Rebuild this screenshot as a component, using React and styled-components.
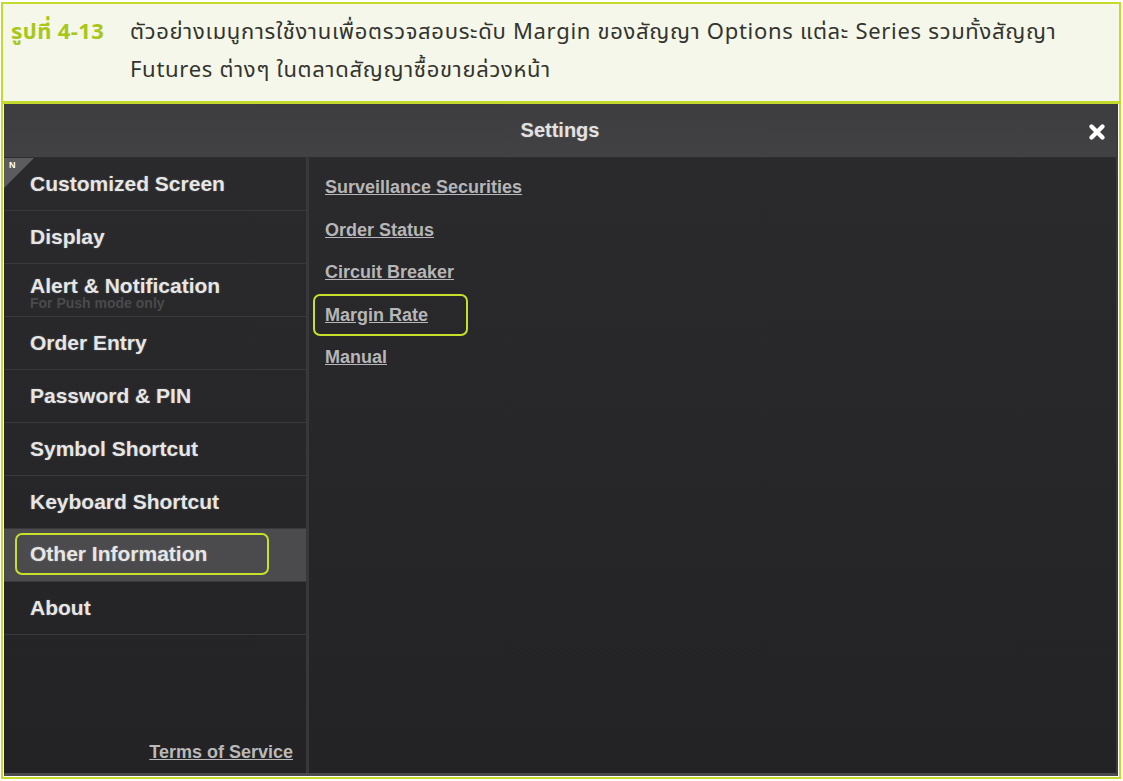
import React from 'react';
import styled, { createGlobalStyle } from 'styled-components';

const GlobalStyle = createGlobalStyle`
  html, body {
    margin: 0;
    padding: 0;
    background: #ffffff;
  }
  * {
    box-sizing: border-box;
  }
`;

const Frame = styled.div`
  width: 1123px;
  height: 781px;
  padding: 2px 2px 2px 1px;
  background: #ffffff;
`;

const Figure = styled.div`
  height: 100%;
  border: 2px solid #c4da2c;
  display: flex;
  flex-direction: column;
`;

const Caption = styled.div`
  height: 100px;
  flex: none;
  background: #f4f7e9;
  border-bottom: 3px solid #c4da2c;
  padding: 10px 10px 0 8px;
  display: flex;
  font-family: "Noto Sans Thai", "Noto Sans", "DejaVu Sans", sans-serif;
  font-size: 22px;
  line-height: 38px;
  color: #34342f;
`;

const FigureNo = styled.span`
  flex: none;
  width: 119px;
  font-weight: 700;
  letter-spacing: 0.4px;
  color: #a9c61a;
`;

const CaptionText = styled.span`
  flex: 1;
  white-space: nowrap;
  letter-spacing: 0.7px;
`;

const Window = styled.div`
  flex: 1;
  margin: 0 1px 1px 1px;
  display: flex;
  flex-direction: column;
  background: linear-gradient(#2b2a2c, #232224);
  border-bottom: 3px solid #4a4a4d;
  border-right: 2px solid #3c3c3f;
  font-family: "Liberation Sans", Arial, sans-serif;
`;

const TitleBar = styled.div`
  position: relative;
  height: 54px;
  flex: none;
  display: flex;
  align-items: center;
  justify-content: center;
  background: linear-gradient(#3d3d3f, #424244);
  border-bottom: 1px solid #2e2e30;
`;

const Title = styled.div`
  font-size: 20px;
  font-weight: 700;
  color: #e2e2e2;
  text-shadow: 0 0 2px rgba(255, 255, 255, 0.2);
`;

const CloseButton = styled.div`
  position: absolute;
  right: 9px;
  top: 18px;
  width: 20px;
  height: 20px;
`;

const Body = styled.div`
  flex: 1;
  display: grid;
  grid-template-columns: 305px 1fr;
`;

const Sidebar = styled.div`
  position: relative;
  display: flex;
  flex-direction: column;
  border-right: 3px solid #38373a;
  padding: 0 0 10px 0;
`;

const Corner = styled.div`
  position: absolute;
  left: 0;
  top: 0;
  width: 0;
  height: 0;
  border-top: 30px solid #5c5c5f;
  border-right: 30px solid transparent;
`;

const CornerLabel = styled.span`
  position: absolute;
  left: 5px;
  top: 2px;
  font-size: 9px;
  font-weight: 700;
  color: #ffffff;
`;

const MenuItem = styled.div`
  height: 53px;
  padding: ${p => (p.$note ? '0 0 4px 11px' : '0 0 0 11px')};
  display: flex;
  flex-direction: column;
  justify-content: center;
  border-bottom: 1px solid #39383b;
  background: ${p => (p.$active ? '#4b4a4d' : 'transparent')};
`;

const ItemLabel = styled.span`
  align-self: flex-start;
  margin-top: ${p => (p.$active ? '-3px' : '0')};
  font-size: 21px;
  line-height: 24px;
  font-weight: 700;
  color: #e6e6e6;
  padding: 7px 60px 7px 13px;
  border: 2px solid ${p => (p.$active ? '#c6e02c' : 'transparent')};
  border-radius: 7px;
  text-shadow: 0 0 2px rgba(255, 255, 255, 0.25);
`;

const ItemNote = styled.span`
  margin-top: -12px;
  padding-left: 15px;
  font-size: 14px;
  line-height: 16px;
  font-weight: 700;
  color: #4a4a4d;
`;

const Spacer = styled.div`
  flex: 1;
`;

const TermsLink = styled.a`
  align-self: flex-end;
  margin-right: 13px;
  font-size: 18px;
  font-weight: 700;
  color: #b9b9b9;
  text-decoration: underline;
`;

const Content = styled.div`
  padding: 8px 0 0 4px;
  display: flex;
  flex-direction: column;
  align-items: flex-start;
  gap: 0.5px;
`;

const ContentLink = styled.a`
  display: inline-block;
  padding: 7px 38px 7px 10px;
  border: 2px solid ${p => (p.$ring ? '#c6e02c' : 'transparent')};
  border-radius: 7px;
  font-size: 18px;
  line-height: 24px;
  font-weight: 700;
  color: #b6b6b8;
  text-decoration: underline;
`;

const menu = [
  { label: 'Customized Screen' },
  { label: 'Display' },
  { label: 'Alert & Notification', note: 'For Push mode only' },
  { label: 'Order Entry' },
  { label: 'Password & PIN' },
  { label: 'Symbol Shortcut' },
  { label: 'Keyboard Shortcut' },
  { label: 'Other Information', active: true },
  { label: 'About' },
];

const links = [
  { label: 'Surveillance Securities' },
  { label: 'Order Status' },
  { label: 'Circuit Breaker' },
  { label: 'Margin Rate', ring: true },
  { label: 'Manual' },
];

const App = () => {
  return (
    <Frame>
      <GlobalStyle />
      <Figure>
        <Caption>
          <FigureNo>รูปที่ 4-13</FigureNo>
          <CaptionText>
            ตัวอย่างเมนูการใช้งานเพื่อตรวจสอบระดับ Margin ของสัญญา Options แต่ละ Series รวมทั้งสัญญา
            <br />
            Futures ต่างๆ ในตลาดสัญญาซื้อขายล่วงหน้า
          </CaptionText>
        </Caption>
        <Window>
          <TitleBar>
            <Title>Settings</Title>
            <CloseButton>
              <svg width="20" height="20" viewBox="0 0 20 20">
                <path d="M4.5 4.5 L15.5 15.5 M15.5 4.5 L4.5 15.5" stroke="#ffffff" strokeWidth="4.4" strokeLinecap="round" />
              </svg>
            </CloseButton>
          </TitleBar>
          <Body>
            <Sidebar>
              <Corner />
              <CornerLabel>N</CornerLabel>
              {menu.map(item => (
                <MenuItem key={item.label} $active={item.active} $note={!!item.note}>
                  <ItemLabel $active={item.active}>{item.label}</ItemLabel>
                  {item.note && <ItemNote>{item.note}</ItemNote>}
                </MenuItem>
              ))}
              <Spacer />
              <TermsLink>Terms of Service</TermsLink>
            </Sidebar>
            <Content>
              {links.map(link => (
                <ContentLink key={link.label} $ring={link.ring}>
                  {link.label}
                </ContentLink>
              ))}
            </Content>
          </Body>
        </Window>
      </Figure>
    </Frame>
  );
};

export default App;
